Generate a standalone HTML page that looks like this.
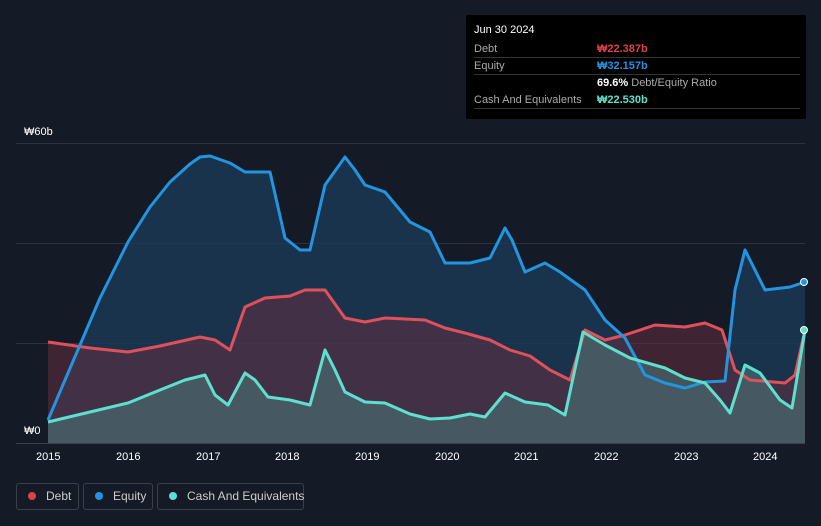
<!DOCTYPE html><html><head><style>
html,body{margin:0;width:821px;height:526px;background:#151b26;font-family:"Liberation Sans",sans-serif;overflow:hidden;position:relative}
.t{position:absolute;color:#fff;font-size:11px}
.tip{position:absolute;left:466px;top:15px;width:340px;height:104px;background:#000;border-radius:2px}
.row{position:absolute;left:8px;width:326px;font-size:11px;color:#aaa;border-bottom:1px solid #333;height:16px;line-height:16px;white-space:nowrap}
.v{position:absolute;left:123px;font-weight:bold}
.lg{position:absolute;top:483px;height:27px;border:1px solid #3a404a;border-radius:3px;color:#ccc;font-size:12px;line-height:25px;box-sizing:border-box;white-space:nowrap}
.dot{display:inline-block;width:8px;height:8px;border-radius:50%;margin:0 10px 0 11px;vertical-align:0px}
</style></head><body>
<svg width="821" height="526" style="position:absolute;left:0;top:0">
<g stroke="#2b3340" stroke-width="1"><line x1="16" y1="143.5" x2="805" y2="143.5"/><line x1="16" y1="243.5" x2="805" y2="243.5"/><line x1="16" y1="343.5" x2="805" y2="343.5"/></g>
<line x1="16" y1="443.5" x2="805" y2="443.5" stroke="#3a4250"/>
<polygon fill="#1b3a56" fill-opacity="0.8" points="48,443 48,420 65,380 80,345 100,298 128,242 150,207 170,182 190,164 200,157 210,156 230,163 245,172 270,172 285,238 300,250 310,250 325,185 345,157 355,170 365,185 385,192 410,222 430,232 445,263 470,263 490,258 505,228 512,240 525,272 545,263 560,272 585,290 605,320 625,338 645,375 665,383 685,388 705,382 725,381 735,290 745,250 765,290 790,287 805,282 805,443"/>
<polygon fill="#6a3040" fill-opacity="0.5" points="48,443 48,342 90,348 128,352 160,346 200,337 215,340 230,350 245,307 265,298 290,296 305,290 325,290 345,318 365,322 385,318 425,320 445,328 465,333 490,340 510,350 530,356 550,370 570,380 585,330 605,340 625,335 655,325 685,327 705,323 722,330 735,370 750,380 785,383 795,375 805,330 805,443"/>
<polygon fill="#4a7a7a" fill-opacity="0.55" points="48,443 48,422 90,412 128,403 160,390 185,380 205,375 215,395 228,405 245,373 255,380 268,397 290,400 310,405 325,350 335,370 345,392 365,402 385,403 410,414 430,419 450,418 470,414 485,417 505,393 525,402 548,405 565,415 583,332 605,345 630,358 665,368 685,378 705,383 720,400 730,413 745,365 760,373 780,400 792,408 805,330 805,443"/>
<g fill="none" stroke-width="3" stroke-linejoin="round">
<polyline stroke="#e0505a" points="48,342 90,348 128,352 160,346 200,337 215,340 230,350 245,307 265,298 290,296 305,290 325,290 345,318 365,322 385,318 425,320 445,328 465,333 490,340 510,350 530,356 550,370 570,380 585,330 605,340 625,335 655,325 685,327 705,323 722,330 735,370 750,380 785,383 795,375 805,330"/>
<polyline stroke="#2394e0" points="48,420 65,380 80,345 100,298 128,242 150,207 170,182 190,164 200,157 210,156 230,163 245,172 270,172 285,238 300,250 310,250 325,185 345,157 355,170 365,185 385,192 410,222 430,232 445,263 470,263 490,258 505,228 512,240 525,272 545,263 560,272 585,290 605,320 625,338 645,375 665,383 685,388 705,382 725,381 735,290 745,250 765,290 790,287 805,282"/>
<polyline stroke="#5ee0cc" points="48,422 90,412 128,403 160,390 185,380 205,375 215,395 228,405 245,373 255,380 268,397 290,400 310,405 325,350 335,370 345,392 365,402 385,403 410,414 430,419 450,418 470,414 485,417 505,393 525,402 548,405 565,415 583,332 605,345 630,358 665,368 685,378 705,383 720,400 730,413 745,365 760,373 780,400 792,408 805,330"/>
</g>
<circle cx="804" cy="282" r="3.5" fill="#2394e0" stroke="#fff" stroke-width="1"/>
<circle cx="804" cy="330" r="3.5" fill="#5ee0cc" stroke="#fff" stroke-width="1"/>
</svg>
<div class="t" style="left:24px;top:126px">₩60b</div>
<div class="t" style="left:24px;top:425px">₩0</div>
<div class="t" style="left:36px;top:451px">2015</div><div class="t" style="left:116px;top:451px">2016</div><div class="t" style="left:196px;top:451px">2017</div><div class="t" style="left:275px;top:451px">2018</div><div class="t" style="left:355px;top:451px">2019</div><div class="t" style="left:435px;top:451px">2020</div><div class="t" style="left:514px;top:451px">2021</div><div class="t" style="left:594px;top:451px">2022</div><div class="t" style="left:674px;top:451px">2023</div><div class="t" style="left:753px;top:451px">2024</div>
<div class="tip">
<div style="position:absolute;left:8px;top:9px;color:#fff;font-size:11px">Jun 30 2024</div>
<div class="row" style="top:26px">Debt<span class="v" style="color:#e0404a">₩22.387b</span></div>
<div class="row" style="top:43px">Equity<span class="v" style="color:#2394e0">₩32.157b</span></div>
<div class="row" style="top:60px;border-bottom:none"><span class="v" style="color:#fff">69.6% <span style="color:#aaa;font-weight:normal">Debt/Equity Ratio</span></span></div>
<div class="row" style="top:77px">Cash And Equivalents<span class="v" style="color:#5ee0cc">₩22.530b</span></div>
</div>
<div class="lg" style="left:16px;width:63px"><span class="dot" style="background:#e0404a"></span>Debt</div>
<div class="lg" style="left:83px;width:70px"><span class="dot" style="background:#2394e0"></span>Equity</div>
<div class="lg" style="left:157px;width:147px"><span class="dot" style="background:#5ee0cc"></span>Cash And Equivalents</div>
</body></html>
